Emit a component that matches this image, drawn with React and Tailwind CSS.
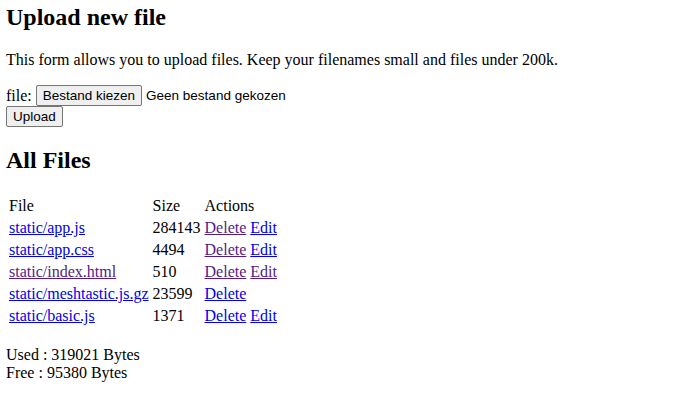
const FILES = [
  { name: 'static/app.js', size: 284143, visited: [false, true, false], edit: true },
  { name: 'static/app.css', size: 4494, visited: [false, true, false], edit: true },
  { name: 'static/index.html', size: 510, visited: [true, true, true], edit: true },
  { name: 'static/meshtastic.js.gz', size: 23599, visited: [false, false, false], edit: false },
  { name: 'static/basic.js', size: 1371, visited: [false, false, false], edit: true },
];

function Link({ visited, children }) {
  return (
    <a href="#" className={`underline ${visited ? 'text-[#551a8b]' : 'text-[#0000ee]'}`}>
      {children}
    </a>
  );
}

function Button({ children }) {
  return (
    <button
      type="button"
      className="inline-flex items-center h-[21px] px-[6px] bg-[#efefef] border border-[#767676] rounded-[2px] text-[13.5px] text-black font-['Liberation_Sans',Arial,sans-serif] align-middle"
    >
      {children}
    </button>
  );
}

export default function App() {
  return (
    <div className="min-h-screen bg-white text-black pl-[6px] pt-[4px] font-['Liberation_Serif','Times_New_Roman',serif] text-[16px] leading-[normal]">
      <h2 className="text-[24px] font-bold leading-[normal] mb-[20px]">Upload new file</h2>
      <p className="mb-[16px]">
        This form allows you to upload files. Keep your filenames small and files under 200k.
      </p>

      <form onSubmit={e => e.preventDefault()}>
        <div className="flex items-center h-[21px]">
          <span>file:</span>
          <span className="ml-[4px]"><Button>Bestand kiezen</Button></span>
          <span className="ml-[4px] text-[13.5px] font-['Liberation_Sans',Arial,sans-serif]">Geen bestand gekozen</span>
        </div>
        <div className="flex h-[21px]">
          <Button>Upload</Button>
        </div>
      </form>

      <h2 className="text-[24px] font-bold leading-[normal] mt-[20px] mb-[20px]">All Files</h2>

      <table className="border-separate border-spacing-[2px]">
        <tbody>
          <tr>
            <td className="p-[1px]">File</td>
            <td className="p-[1px]">Size</td>
            <td className="p-[1px]">Actions</td>
          </tr>
          {FILES.map(f => (
            <tr key={f.name}>
              <td className="p-[1px]"><Link visited={f.visited[0]}>{f.name}</Link></td>
              <td className="p-[1px]">{f.size}</td>
              <td className="p-[1px]">
                <Link visited={f.visited[1]}>Delete</Link>
                {f.edit && <> <Link visited={f.visited[2]}>Edit</Link></>}
              </td>
            </tr>
          ))}
        </tbody>
      </table>

      <p className="mt-[18px]">
        Used : 319021 Bytes<br />
        Free : 95380 Bytes
      </p>
    </div>
  );
}
